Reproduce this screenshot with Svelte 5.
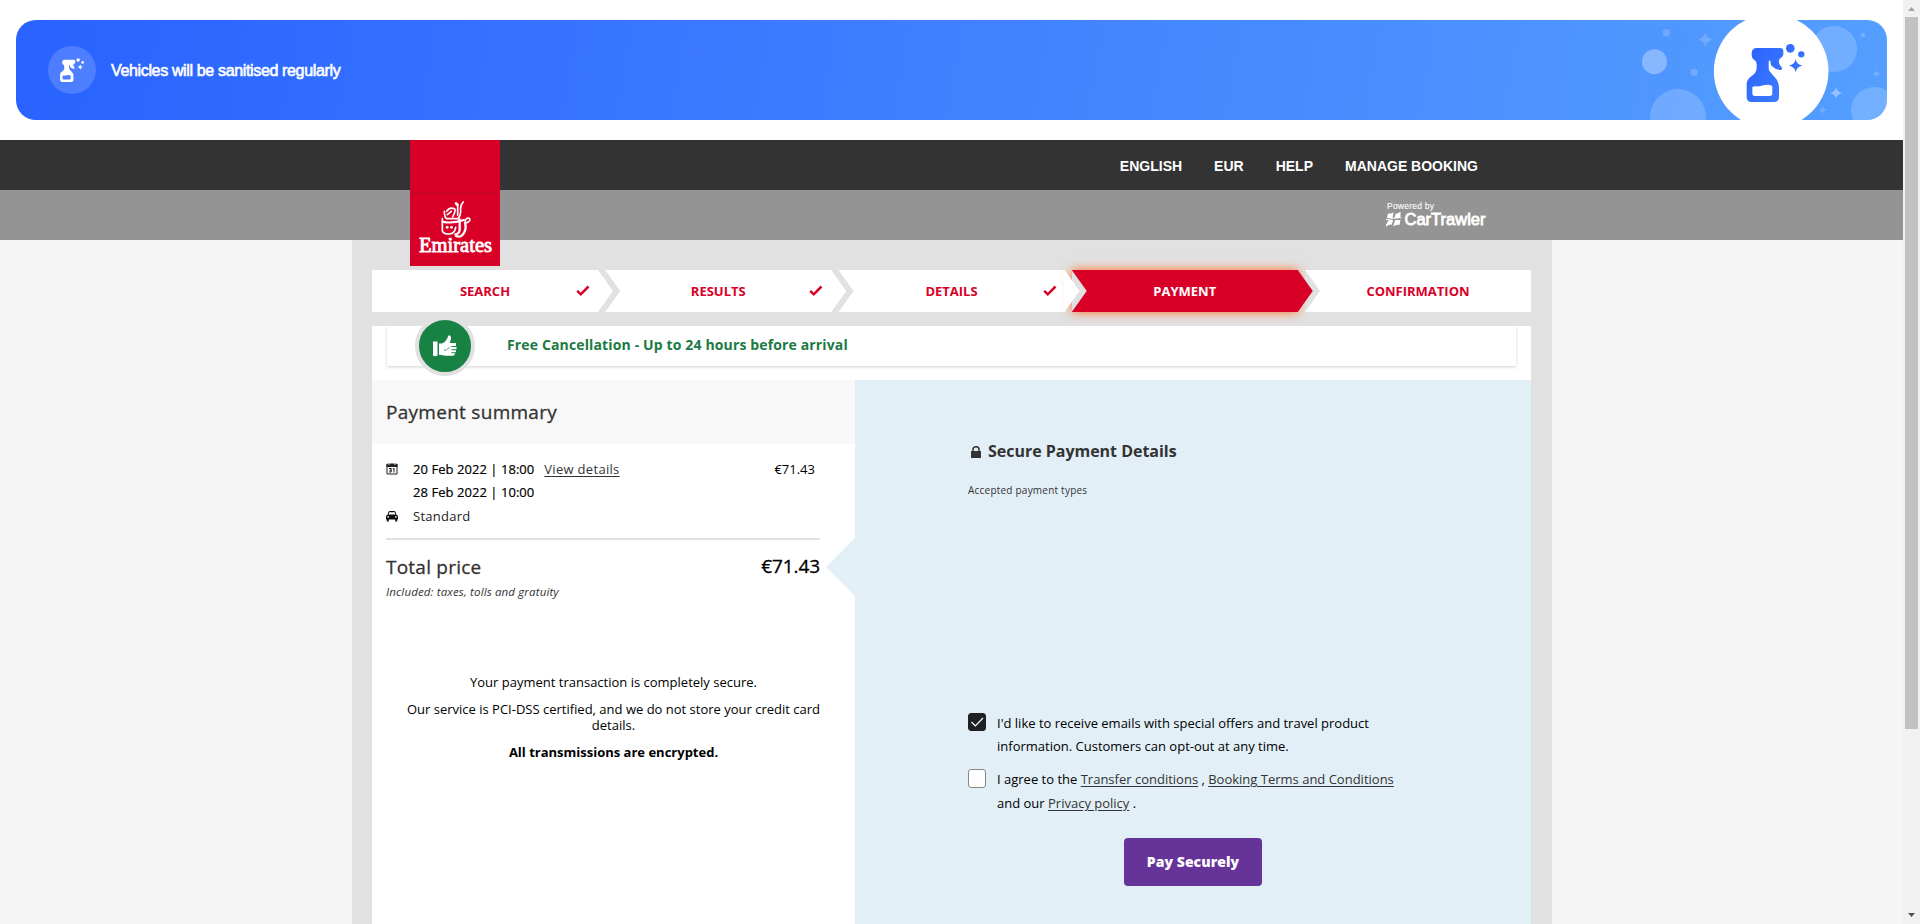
<script>
  const steps = [
    { label: 'SEARCH', done: true },
    { label: 'RESULTS', done: true },
    { label: 'DETAILS', done: true },
    { label: 'PAYMENT', active: true },
    { label: 'CONFIRMATION' }
  ];
  const menu = ['ENGLISH', 'EUR', 'HELP', 'MANAGE BOOKING'];
</script>

{#snippet spray()}
  <path fill-rule="evenodd" d="M470 144H540Q550 144 550 154V164Q549 170 543 173Q535 178 537 188Q539 195 545 202Q549 210 541 210Q526 209 515 198Q511 192 511 182Q506 180 506 186V198Q506 211 509 214Q514 221 523 230Q537 243 537 265V291Q537 306 522 306H455Q440 306 440 291V252Q440 238 455 228Q470 218 470 205V192Q469 182 462 179Q455 174 455 165V158Q457 144 470 144ZM457 262Q460 257 469 259Q480 260 490 256Q505 252 517 258V280Q517 288 509 288H465Q457 288 457 280Z" />
  <circle cx="571" cy="145" r="13" />
  <circle cx="604" cy="163" r="9.5" />
  <path d="M587 178Q590 194 607 197Q590 200 587 216Q584 200 567 197Q584 194 587 178Z" />
{/snippet}

<div class="screen">
  <div class="page">
    <div class="banner">
      <span class="badge">
        <svg width="24" height="24" viewBox="439 131 175 175" fill="#fff">{@render spray()}</svg>
      </span>
      <span class="banner-text">Vehicles will be sanitised regularly</span>
      <svg class="art" width="287" height="100" viewBox="0 60 861 300">
        <defs>
          <linearGradient id="bottle" x1="0" y1="0" x2="1" y2="1">
            <stop offset="0" stop-color="#2962ff" /><stop offset="1" stop-color="#3f7dff" />
          </linearGradient>
        </defs>
        <g fill="#fff">
          <circle cx="163.500" cy="185" r="37.500" opacity=".32" />
          <g opacity=".18">
            <circle cx="199" cy="98" r="11" /><circle cx="283" cy="217" r="11" />
            <circle cx="234" cy="351" r="84" /><circle cx="702" cy="147" r="69" />
            <circle cx="823" cy="331" r="70" /><circle cx="789" cy="105" r="7" />
            <path d="M316 97Q320 115 339 119Q320 123 316 141Q312 123 294 119Q312 115 316 97Z" />
            <path d="M829 210Q831 220 842 222Q831 224 829 234Q827 224 816 222Q827 220 829 210Z" />
            <path d="M668 317Q670 328 681 330Q670 332 668 342Q666 332 655 330Q666 328 668 317Z" />
          </g>
          <path opacity=".38" d="M708 261Q711 276 728 279Q711 282 708 297Q705 282 689 279Q705 276 708 261Z" />
          <circle cx="513.500" cy="214" r="172" />
        </g>
        <g fill="url(#bottle)">{@render spray()}</g>
      </svg>
    </div>

    <header>
      <nav>
        {#each menu as item}<a href="#top">{item}</a>{/each}
      </nav>
      <div class="subbar">
        <svg width="106" height="32" viewBox="0 0 106 32" fill="#fff">
          <text x="1" y="8.500" font-size="8.500" textLength="47" font-family="Liberation Sans, sans-serif" stroke="#fff" stroke-width=".1">Powered by</text>
          <g transform="translate(0 11.500)">
            <path d="M2 2Q5 2.500 7.500 1L6.500 6.500H1Z" />
            <path d="M9.500 2.500Q12 2 14.500 0V5L12.500 7H8.500Z" />
            <path d="M2.500 8.500H7L6 13Q3 12.500 0 15V13Q2 11 2.500 8.500Z" />
            <path d="M9 8.500H14.500L13.500 13.500Q10.500 12.500 7 15L8 12.500Z" />
            <path d="M0 8Q4 8 8 6.500Q12 5 15.500 6.500" fill="none" stroke="#fff" stroke-width="1" />
          </g>
          <text x="18.500" y="25" font-size="16.500" stroke="#fff" stroke-width=".8" textLength="81" lengthAdjust="spacingAndGlyphs" font-family="Liberation Sans, sans-serif">CarTrawler</text>
        </svg>
      </div>
      <div class="logo">
        <svg width="90" height="126" viewBox="0 0 270 378" fill="none" stroke="#fff" stroke-linecap="round" stroke-linejoin="round">
          <path d="M0 157.500H270M0 364.500H270" stroke="#9b0f2c" stroke-width="2" opacity=".7" />
          <path stroke-width="5" d="M160 186Q150 196 152 215Q152 226 144 236" />
          <path stroke-width="8" d="M138 190L143 195" />
          <path stroke-width="5" d="M143 197V226M110 214Q118 200 134 206Q138 214 128 230M112 224L124 214M103 214Q103 232 110 236H142" />
          <path stroke-width="6" d="M98 245Q124 252 162 240" />
          <path stroke-width="7" d="M149 238V270Q148 281 136 283" />
          <path stroke-width="5" d="M97 236V272Q100 282 116 282Q134 282 137 262" />
          <path stroke-width="7" d="M166 252Q170 270 158 284Q150 293 138 288" />
          <path stroke-width="5" d="M166 248Q164 238 173 234Q182 234 179 242Q174 250 164 248" />
          <path stroke-width="8" d="M111 262H112M124 262H125" />
          <text x="27" y="335" fill="#fff" stroke="#fff" stroke-width="2.500" font-size="62" textLength="219" lengthAdjust="spacingAndGlyphs" font-family="Liberation Serif, serif">Emirates</text>
        </svg>
      </div>
    </header>

    <main>
      <ol class="steps">
        {#each steps as s}
          <li class:active={s.active}>
            <span>{s.label}</span>
            {#if s.done}
              <svg class="tick" width="14" height="12" viewBox="0 0 14 12"><path d="M1.200 5.800L4.800 9.300L12.500 1.500" fill="none" stroke="#d80027" stroke-width="2.500" /></svg>
            {/if}
          </li>
        {/each}
      </ol>

      <div class="panel">
        <div class="promo-wrap">
          <div class="promo">Free Cancellation - Up to 24 hours before arrival</div>
          <div class="thumb">
            <svg width="24" height="22" viewBox="0 0 24 22" fill="#fff">
              <path d="M0 6.500H4.500V20.500Q2 22 0 20.500Z" />
              <path d="M6 8.500H9Q12 7.500 14 4Q15 .5 16.300 0Q18.500 1 18 4L16.800 8H23V11H18.500V12H23.500V14.200H18.500V15.200H23V17.300H18.500V18.300H22Q22 20.500 20 20.700H12Q9 19.800 6 19.800Z" />
              <path d="M11 14.500L13 15.500L17 11.500" fill="none" stroke="#178244" stroke-width=".7" />
            </svg>
          </div>
        </div>

        <div class="columns">
          <section class="summary">
            <h2>Payment summary</h2>
            <div class="rows">
              <div class="row">
                <svg width="12" height="12" viewBox="0 0 12 12">
                  <path d="M1.500 1H10.500Q11 1 11 2V11H1V2Q1 1 1.500 1Z" fill="none" stroke="#222" stroke-width="1" />
                  <path d="M.5 1H11.500V4H.5Z" fill="#222" /><path d="M3 0V2M9 0V2" stroke="#fff" stroke-width=".8" />
                  <path d="M3 5.500H5.200V9H3M3.500 7.200H5.200M6.800 6L8 5.200V9.500" fill="none" stroke="#222" stroke-width="1" />
                </svg>
                <span class="date">20 Feb 2022 | 18:00</span><a href="#details">View details</a>
                <span class="price">€71.43</span>
              </div>
              <div class="row"><span class="date indent">28 Feb 2022 | 10:00</span></div>
              <div class="row car">
                <svg width="12" height="11" viewBox="0 0 12 11" fill="#111">
                  <path fill-rule="evenodd" d="M2.600 .5Q3 0 4 0H8Q9 0 9.400 .5L10.500 3.700Q12 4.200 12 5.500V8.500H11.200V10.500H9.200V8.500H2.800V10.500H.8V8.500H0V5.500Q0 4.200 1.500 3.700ZM3.300 1.300L2.600 3.600H9.400L8.700 1.300ZM1.300 5.200V6.600H3V5.200ZM9 5.200V6.600H10.700V5.200Z" />
                </svg>
                <span>Standard</span>
              </div>
            </div>
            <div class="total"><span>Total price</span><strong>€71.43</strong></div>
            <p class="included">Included: taxes, tolls and gratuity</p>
            <div class="secure">
              <p>Your payment transaction is completely secure.</p>
              <p>Our service is PCI-DSS certified, and we do not store your credit card details.</p>
              <p><b>All transmissions are encrypted.</b></p>
            </div>
          </section>

          <section class="details">
            <h3>
              <svg width="10" height="12" viewBox="0 0 10 12"><path d="M0 5H10V12H0Z" fill="#333" /><path d="M2 5.500V3.500Q2 .8 5 .8T8 3.500V5.500" fill="none" stroke="#333" stroke-width="1.500" /></svg>
              <span>Secure Payment Details</span>
            </h3>
            <p class="accepted">Accepted payment types</p>
            <div class="checks">
              <div class="check first">
                <span class="box on"><svg width="14" height="12" viewBox="0 0 14 12"><path d="M1.500 6L5.300 9.800L13 2" fill="none" stroke="#fff" stroke-width="1.200" /></svg></span>
                <p>I'd like to receive emails with special offers and travel product<br />information. Customers can opt-out at any time.</p>
              </div>
              <div class="check second">
                <span class="box"></span>
                <p>I agree to the <a href="#transfer">Transfer conditions</a> , <a href="#terms">Booking Terms and Conditions</a><br />and our <a href="#privacy">Privacy policy</a> .</p>
              </div>
            </div>
            <button>Pay Securely</button>
          </section>
        </div>
      </div>
    </main>
  </div>
  <div class="scrollbar">
    <i class="up"></i><div class="handle"></div><i class="down"></i>
  </div>
</div>

<style>
  :global(body) { overflow: hidden; }
  .screen { display: flex; height: 924px; overflow: hidden; background: #f5f5f5; font: 13px/24px "Open Sans", sans-serif; color: #000; }
  .screen * { box-sizing: border-box; }
  svg { display: block; flex: none; }
  p, h2, h3, ol { margin: 0; padding: 0; }
  a { color: #333; text-decoration: underline; text-underline-offset: 2px; }
  .page { width: 1903px; height: 924px; overflow: hidden; display: flex; flex-direction: column; border-top: 20px solid #fff; }
  .banner { flex: none; height: 100px; margin: 0 16px; border-radius: 20px; overflow: hidden; background: linear-gradient(100deg, #2962ff, #559fff); display: flex; align-items: center; padding-left: 32px; box-shadow: 0 0 0 40px #fff; position: relative; }
  .badge { width: 48px; height: 48px; border-radius: 50%; background: rgba(255,255,255,.17); display: flex; align-items: center; justify-content: center; }
  .banner-text { margin-left: 15px; font: 16px/20px "Liberation Sans", sans-serif; letter-spacing: -.35px; color: #fff; -webkit-text-stroke: .6px #fff; padding-top: 1px; }
  .art { margin-left: auto; }
  header { flex: none; margin-top: 20px; position: relative; background: #949494; }
  nav { height: 50px; background: #333; padding: 1px 425px 0 0; display: flex; justify-content: flex-end; align-items: center; gap: 32px; }
  nav a { font: bold 14px/20px "Liberation Sans", sans-serif; color: #fff; text-decoration: none; }
  .subbar { height: 50px; display: flex; justify-content: flex-end; padding: 10px 411px 0 0; }
  .logo { position: absolute; left: 410px; top: 0; width: 90px; height: 126px; background: #d80027; }
  main { flex: 1; width: 1200px; margin-left: 352px; background: #e1e1e1; padding: 30px 21px 0 20px; display: flex; flex-direction: column; }
  .steps { list-style: none; display: grid; grid-template-columns: repeat(5, 226px); justify-content: space-between; height: 42px; flex: none; }
  li { position: relative; background: #fff; color: #d80027; font-weight: 700; display: flex; align-items: center; justify-content: center; }
  li:not(:first-child)::before { content: ""; position: absolute; left: 0; top: 0; width: 15px; height: 42px; background: #e1e1e1; clip-path: polygon(0 0, 100% 50%, 0 100%); }
  li:not(:last-child)::after { content: ""; position: absolute; z-index: 2; left: calc(100% - 1px); top: 0; width: 16px; height: 42px; background: #fff; clip-path: polygon(0 0, 1px 0, 100% 50%, 1px 100%, 0 100%); }
  li.active { background: #d80027; color: #fff; box-shadow: 0 0 10px #ff6a1e; }
  li.active:not(:last-child)::after { background: #d80027; }
  .tick { position: absolute; right: 8px; top: 15px; z-index: 3; }
  .panel { flex: 1; margin-top: 14px; background: #fff; display: flex; flex-direction: column; }
  .promo-wrap { position: relative; height: 54px; padding: 0 15px 0 15px; flex: none; }
  .promo { height: 40px; box-shadow: 0 1px 3px rgba(0,0,0,.18); clip-path: inset(0 -4px -5px -4px); padding-left: 120px; font: 700 14px/38px "Open Sans", sans-serif; letter-spacing: .14px; color: #1b7a43; }
  .thumb { position: absolute; left: 43px; top: -10px; width: 60px; height: 60px; border-radius: 50%; background: #178244; border: 4px solid #e1e1e1; display: flex; align-items: center; justify-content: center; }
  .columns { flex: 1; display: flex; }
  .summary { width: 483px; }
  h2 { height: 64px; background: #f8f8f8; padding-left: 14px; font: 500 19px/65px "Open Sans", sans-serif; letter-spacing: .28px; -webkit-text-stroke: .3px #333; color: #333; }
  .rows { margin: 0 35px 0 14px; height: 96px; padding-top: 13px; border-bottom: 2px solid #e1e1e1; }
  .row { display: flex; align-items: center; height: 23.5px; }
  .row a { margin-left: 10px; letter-spacing: .3px; }
  .date { font-weight: 500; margin-left: 15px; letter-spacing: .05px; -webkit-text-stroke: .2px #000; }
  .date.indent { margin-left: 27px; }
  .row.car svg { margin-top: 2px; }
  .row.car span { margin-left: 15px; color: #222; letter-spacing: .25px; }
  .price { margin-left: auto; padding-right: 5px; }
  .total { margin: 13px 35px 0 14px; height: 28px; display: flex; justify-content: space-between; font: 500 19px/28px "Open Sans", sans-serif; letter-spacing: .23px; -webkit-text-stroke: .3px; color: #333; }
  .total strong { font-weight: 500; color: #000; line-height: 27px; letter-spacing: -.1px; }
  .included { margin-left: 14px; font-size: 11.5px; line-height: 22px; letter-spacing: .14px; font-style: italic; color: #333; }
  .secure { margin: 71px 34px 0 34px; text-align: center; line-height: 16px; }
  .secure p { margin-bottom: 11px; }
  .details { position: relative; flex: 1; background: #e2eff7; padding-left: 113px; }
  .details::before { content: ""; position: absolute; left: -29px; top: 158px; width: 29px; height: 58px; background: #e2eff7; clip-path: polygon(100% 0, 0 50%, 100% 100%); }
  h3 { margin-top: 59px; height: 24px; padding-left: 3px; display: flex; align-items: center; gap: 7px; font: 700 16px/24px "Open Sans", sans-serif; letter-spacing: -.02px; color: #333; }
  h3 svg { margin-top: 2px; }
  .accepted { margin-top: 17px; font-size: 10px; line-height: 20px; letter-spacing: .22px; color: #333; }
  .checks { margin-top: 211px; }
  .check { display: flex; gap: 11px; line-height: 24px; }
  .check.first { line-height: 23px; height: 46px; }
  .check.first p { margin-top: 1px; }
  .check.second { margin-top: 10px; }
  .box { width: 18px; height: 18px; margin-top: 2px; flex: none; border-radius: 3px; border: 1px solid #888; background: #fff; display: flex; align-items: center; justify-content: center; }
  .check.second .box { height: 19px; }
  .box.on { background: #1f2022; border-color: #1f2022; }
  .check p { white-space: nowrap; }
  button { display: block; width: 138px; height: 48px; margin: 23px 0 0 156px; border: 0; border-radius: 4px; background: #663399; color: #fff; font: 800 14px/46px "Open Sans", sans-serif; letter-spacing: .05px; padding: 0; }
  .scrollbar { width: 17px; background: #f1f1f1; display: flex; flex-direction: column; align-items: center; padding: 7px 0; }
  .scrollbar i { width: 7px; height: 4px; }
  .up { background: #a3a3a3; clip-path: polygon(50% 0, 100% 100%, 0 100%); }
  .down { margin-top: auto; background: #505050; clip-path: polygon(0 0, 100% 0, 50% 100%); }
  .handle { width: 13px; height: 712px; margin-top: 6px; background: #c1c1c1; }
</style>
